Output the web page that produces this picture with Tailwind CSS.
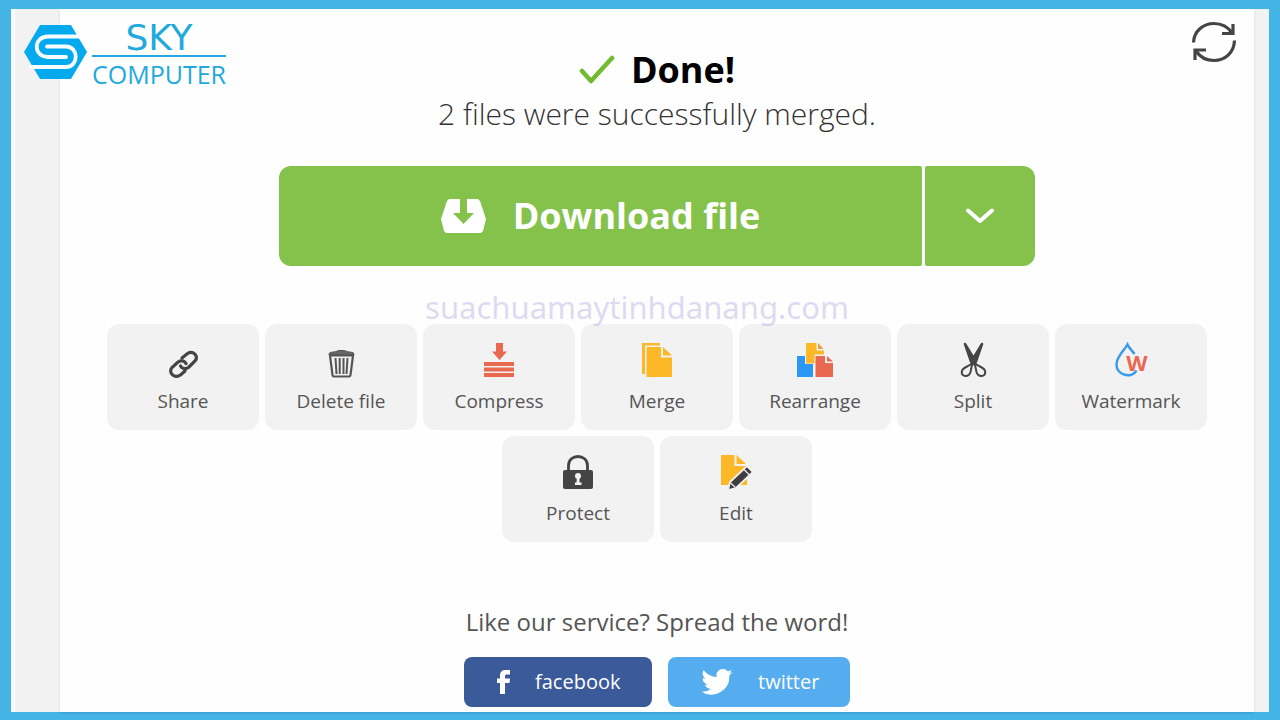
<!DOCTYPE html>
<html lang="en">
<head>
    <meta charset="UTF-8">
    <meta name="viewport" content="width=device-width, initial-scale=1.0">
    <title>Merge PDF - Done</title>
    <script src="https://cdn.jsdelivr.net/npm/@tailwindcss/browser@4"></script>
</head>
<body class="relative flex min-h-screen bg-[#44b3e6] px-[11px] pt-[9px] pb-2 font-['Open_Sans',sans-serif]">

    <!-- Logo -->
    <a href="#" aria-label="Sky Computer" class="absolute left-6 top-5 z-10 flex items-start gap-1 text-[#1fa9dc]">
        <svg class="mt-[5px] h-[54px] w-[64px]" viewBox="0 0 64 54">
            <path d="M16 0H47L63 27L47 54H16L0 27Z" fill="#05a9ee"/>
            <path d="M56 11.500H24C9 11.500 9 32 24 32H42" fill="none" stroke="#f8fcfe" stroke-width="3.800" stroke-linecap="round"/>
            <path d="M23 21.500H42C55 21.500 55 42 42 42H6" fill="none" stroke="#f8fcfe" stroke-width="3.800" stroke-linecap="round"/>
        </svg>
        <span class="flex flex-col items-center">
            <span class="font-['DejaVu_Sans',sans-serif] text-[36px] leading-[35px]">SKY</span>
            <span class="h-0.5 w-[134px] bg-[#1fa9dc]"></span>
            <span class="text-[25px] leading-[34px]">COMPUTER</span>
        </span>
    </a>

    <main class="flex-1 border-l-4 border-[#f8fcfe] bg-[#f2f2f2]">
        <section class="relative ml-[45px] mr-[15px] flex h-full flex-col items-center bg-[#fefefe] px-10 pt-[37px] pb-[5px] shadow-sm">

            <button type="button" aria-label="Start over" class="absolute right-4 top-3 h-[42px] w-[48px]">
                <svg class="h-full w-full" viewBox="0 0 48 42" fill="none" stroke="#444" stroke-width="3.200">
                    <path d="M3.500 21.500C4 10 13 2.500 24 2.500C32 2.500 38 6 42 12"/>
                    <path d="M44.500 19.500C44 32 35 39.500 24 39.500C16 39.500 10 36 6 30"/>
                    <path d="M43 3V12.500H32M5 39V29H16"/>
                </svg>
            </button>

            <h1 class="flex items-center gap-4 text-[36px] leading-[48px] font-bold text-black">
                <svg class="h-[30px] w-[36px]" viewBox="0 0 36 30">
                    <path d="M3 16L12 26L33 3" fill="none" stroke="#72ba2f" stroke-width="4.500" stroke-linecap="round" stroke-linejoin="round"/>
                </svg>
                Done!
            </h1>
            <p class="text-[30px] leading-[40px] font-light text-[#333]">2 files were successfully merged.</p>

            <!-- Download -->
            <div class="mt-8 flex h-[100px] w-full max-w-[756px] gap-[3px]">
                <button type="button" class="flex flex-1 items-center justify-center gap-[27px] rounded-l-xl rounded-r-xs bg-[#84c24b] text-[36px] font-bold text-white">
                    <svg class="h-[34px] w-[45px]" viewBox="0 0 45 34" fill="#fff">
                        <path d="M8 0H19V14H12L22.500 25L33 14H26V0H37L39 2L45 20L42 32L40 34H5L3 32L0 20L6 2Z"/>
                    </svg>
                    Download file
                </button>
                <button type="button" aria-label="More download options" class="flex w-[110px] items-center justify-center rounded-l-xs rounded-r-xl bg-[#84c24b]">
                    <svg class="h-4 w-[30px]" viewBox="0 0 30 16">
                        <path d="M3 2.500L15 13L27 2.500" fill="none" stroke="#fff" stroke-width="4" stroke-linecap="round" stroke-linejoin="round"/>
                    </svg>
                </button>
            </div>

            <!-- Next actions -->
            <div class="mt-[58px] flex flex-wrap justify-center gap-1.5 text-[19px] leading-6 text-[#555]">
                <button type="button" class="flex h-[106px] w-[152px] flex-col items-center gap-[11px] rounded-xl bg-[#f2f2f2] pt-[18px]">
                    <svg class="h-9 w-10" viewBox="0 0 40 36" fill="none" stroke="#444" stroke-width="3.200" stroke-linecap="round">
                        <path d="M19 16L24.500 11.500C30 8 36 14 32 19L26 25C23 27.500 19 27 17.500 24"/>
                        <path d="M22 29L17.500 33C11 37 5 30.500 9 25.500L15 20C18 18 21.500 18.500 23 21.500"/>
                    </svg>
                    Share
                </button>
                <button type="button" class="flex h-[106px] w-[152px] flex-col items-center gap-[11px] rounded-xl bg-[#f2f2f2] pt-[18px]">
                    <svg class="h-9 w-10" viewBox="0 0 40 36" fill="none" stroke="#555">
                        <path d="M9 13.500H32L29.500 33Q29.300 34.500 28 34.500H13Q11.700 34.500 11.500 33Z" stroke-width="2.200"/>
                        <path d="M16 9.500Q16 8.500 17.500 8.500H23.500Q25 8.500 25 9.500L32 10.500Q33 11 33 12.500H8Q8 11 9 10.500Z" fill="#666" stroke-width="1"/>
                        <path d="M14.500 16L15.500 32M18.700 16V32M22.500 16V32M26.500 16L25.500 32" stroke-width="2"/>
                    </svg>
                    Delete file
                </button>
                <button type="button" class="flex h-[106px] w-[152px] flex-col items-center gap-[11px] rounded-xl bg-[#f2f2f2] pt-[18px]">
                    <svg class="h-9 w-10" viewBox="0 0 40 36" fill="#e96850">
                        <path d="M17 1H24V9.500H28L20.500 18L13 9.500H17Z"/>
                        <path d="M5 20H35V24H5ZM5 25.500H35V29.500H5ZM5 31H35V35H5Z"/>
                    </svg>
                    Compress
                </button>
                <button type="button" class="flex h-[106px] w-[152px] flex-col items-center gap-[11px] rounded-xl bg-[#f2f2f2] pt-[18px]">
                    <svg class="h-9 w-10" viewBox="0 0 40 36" fill="#fdb827">
                        <path d="M5 1H23V3.500H8V32H5Z"/>
                        <path d="M9.500 5H24V15.500H35V35H9.500Z"/>
                        <path d="M26 5V13.500H35Z"/>
                    </svg>
                    Merge
                </button>
                <button type="button" class="flex h-[106px] w-[152px] flex-col items-center gap-[11px] rounded-xl bg-[#f2f2f2] pt-[18px]">
                    <svg class="h-9 w-10" viewBox="0 0 40 36">
                        <path d="M2 14H10V22H18V35H2Z" fill="#2b98f5"/>
                        <path d="M11 1H21.500V8.500H29V12.500H19.500V21.500H11Z" fill="#fdb827"/>
                        <path d="M23 1L28.500 7H23Z" fill="#f09a4a"/>
                        <path d="M20.500 14H30V21H38V35H20.500Z" fill="#e96850"/>
                        <path d="M32 14L38 19.500H32Z" fill="#e96850"/>
                    </svg>
                    Rearrange
                </button>
                <button type="button" class="flex h-[106px] w-[152px] flex-col items-center gap-[11px] rounded-xl bg-[#f2f2f2] pt-[18px]">
                    <svg class="h-9 w-10" viewBox="0 0 40 36">
                        <path d="M12 2L22 18.500L21 22L18 19.500ZM29 2L19 18.500L20 22L23 19.500Z" fill="#444" stroke="#444" stroke-width="2.500" stroke-linejoin="round"/>
                        <path d="M19.500 20.500L17.500 30C16 35.500 8 35.500 8.800 29.500C9.500 24.500 16 25.500 19.500 20.500ZM21.500 20.500L23.500 30C25 35.500 33 35.500 32.200 29.500C31.500 24.500 25 25.500 21.500 20.500Z" fill="none" stroke="#444" stroke-width="2"/>
                    </svg>
                    Split
                </button>
                <button type="button" class="flex h-[106px] w-[152px] flex-col items-center gap-[11px] rounded-xl bg-[#f2f2f2] pt-[18px]">
                    <svg class="h-9 w-10" viewBox="0 0 40 36">
                        <path d="M23.500 12C20.500 8 18 6 16.500 2.500C13 9 5.500 14.500 5.500 22.500C5.500 33.500 20.500 37 25.500 28.500" fill="none" stroke="#3a9be8" stroke-width="2.500"/>
                        <text x="26" y="29" text-anchor="middle" font-size="22" font-weight="700" fill="#e96850">W</text>
                    </svg>
                    Watermark
                </button>
                <button type="button" class="flex h-[106px] w-[152px] flex-col items-center gap-[11px] rounded-xl bg-[#f2f2f2] pt-[18px]">
                    <svg class="h-9 w-10" viewBox="0 0 40 36">
                        <path d="M10.500 17V11.500C10.500 -0.500 29.500 -0.500 29.500 11.500V17" fill="none" stroke="#444" stroke-width="2.800"/>
                        <rect x="5" y="16" width="30" height="19" rx="2" fill="#444"/>
                        <circle cx="20" cy="22" r="3" fill="#f2f2f2"/>
                        <path d="M19 23H21.500V28.500H23.500V31H17V28.500H18.500Z" fill="#f2f2f2"/>
                    </svg>
                    Protect
                </button>
                <button type="button" class="flex h-[106px] w-[152px] flex-col items-center gap-[11px] rounded-xl bg-[#f2f2f2] pt-[18px]">
                    <svg class="h-9 w-10" viewBox="0 0 40 36">
                        <path d="M5 1H18.500V12H31V31H5Z" fill="#fdb827"/>
                        <path d="M20.500 1V10H30Z" fill="#fdb827"/>
                        <path d="M12 36L14 28L31 12L37 18L20 34Z" fill="#3f3d40" stroke="#f2f2f2" stroke-width="1.800"/>
                        <path d="M27.500 15L33.500 21M14 28.500L19.500 33.500" stroke="#f2f2f2" stroke-width="1.200"/>
                    </svg>
                    Edit
                </button>
            </div>

            <!-- Share the service -->
            <p class="mt-16 text-[24px] leading-8 text-[#555]">Like our service? Spread the word!</p>
            <div class="mt-[19px] flex gap-4 text-[20px] text-white">
                <a href="#" class="flex h-[50px] w-[188px] items-center gap-[25px] rounded-lg bg-[#3b5a99] pl-[33px]">
                    <svg class="h-6 w-[13px]" viewBox="0 0 13 24" fill="#fff">
                        <path d="M3 24V13H0V8.500H3V5.500C3 2 5 0 8.500 0H13V4.500H10C8.500 4.500 8 5 8 6V8.500H13L12.500 13H8V24Z"/>
                    </svg>
                    facebook
                </a>
                <a href="#" class="flex h-[50px] w-[182px] items-center gap-[25px] rounded-lg bg-[#55acee] pl-[33px]">
                    <svg class="h-[26px] w-8" viewBox="0 0 24 20" fill="#fff">
                        <path d="M24 2.400a9.800 9.800 0 0 1-2.800.8A4.900 4.900 0 0 0 23.300.5a9.900 9.900 0 0 1-3.100 1.200A4.900 4.900 0 0 0 11.800 6.200 14 14 0 0 1 1.700 1a4.900 4.900 0 0 0 1.500 6.600 4.900 4.900 0 0 1-2.200-.6 4.900 4.900 0 0 0 3.900 4.900 5 5 0 0 1-2.200.1 4.900 4.900 0 0 0 4.600 3.400A9.900 9.900 0 0 1 0 17.500 14 14 0 0 0 21.500 5a10 10 0 0 0 2.500-2.600Z"/>
                    </svg>
                    twitter
                </a>
            </div>
        </section>
    </main>

    <!-- Site watermark -->
    <div class="pointer-events-none absolute left-0 right-1.5 top-[287px] text-center font-['Noto_Sans',sans-serif] text-[31px] leading-[40px] text-[#a7a0dc]/40">suachuamaytinhdanang.com</div>
</body>
</html>
